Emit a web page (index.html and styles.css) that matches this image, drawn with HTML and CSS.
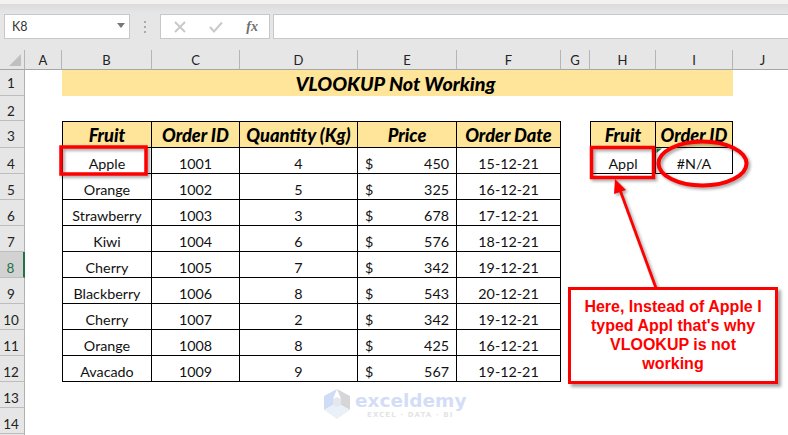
FILE: index.html
```html
<!DOCTYPE html>
<html lang="en">
<head>
<meta charset="utf-8">
<title>VLOOKUP Not Working</title>
<link rel="stylesheet" href="styles.css">
</head>
<body>
<div class="app">
  <div class="strip"></div>
  <div class="formula-bar">
    <div class="name-box"><span>K8</span><i class="caret"></i></div>
    <svg class="dots" width="4" height="14" viewBox="0 0 4 14"><rect x="1" y="1" width="2" height="2"/><rect x="1" y="6" width="2" height="2"/><rect x="1" y="11" width="2" height="2"/></svg>
    <div class="fx-box">
      <svg class="fx-icon" width="12" height="12" viewBox="0 0 12 12"><path d="M1 1L11 11M11 1L1 11"/></svg>
      <svg class="fx-icon" width="14" height="12" viewBox="0 0 14 12"><path d="M1 6L5 10.500L13 1.500"/></svg>
      <span class="fx">fx</span>
    </div>
    <div class="input"></div>
  </div>
  <div class="sheet">
    <div class="corner"><svg width="24" height="19" viewBox="0 0 24 19"><path d="M21 4V16H9Z"/></svg></div>
    <div class="ch">A</div><div class="ch">B</div><div class="ch">C</div><div class="ch">D</div><div class="ch">E</div><div class="ch">F</div><div class="ch">G</div><div class="ch">H</div><div class="ch">I</div><div class="ch">J</div>

    <div class="rh high">1</div><div></div><div class="title">VLOOKUP Not Working</div><div></div>
    <div class="rh">2</div><div class="blank"></div>

    <div class="rh mid">3</div><div></div>
    <div class="hd first">Fruit</div><div class="hd">Order ID</div><div class="hd">Quantity (Kg)</div><div class="hd">Price</div><div class="hd">Order Date</div><div></div>
    <div class="hd first">Fruit</div><div class="hd">Order ID</div><div></div>

    <div class="rh">4</div><div></div>
    <div class="td first">Apple</div><div class="td">1001</div><div class="td">4</div><div class="td money"><span>$</span><span>450</span></div><div class="td">15-12-21</div><div></div>
    <div class="td first">Appl</div><div class="td">#N/A</div><div></div>

    <div class="rh">5</div><div></div>
    <div class="td first">Orange</div><div class="td">1002</div><div class="td">5</div><div class="td money"><span>$</span><span>325</span></div><div class="td">16-12-21</div><div class="rest"></div>

    <div class="rh">6</div><div></div>
    <div class="td first">Strawberry</div><div class="td">1003</div><div class="td">3</div><div class="td money"><span>$</span><span>678</span></div><div class="td">17-12-21</div><div class="rest"></div>

    <div class="rh">7</div><div></div>
    <div class="td first">Kiwi</div><div class="td">1004</div><div class="td">6</div><div class="td money"><span>$</span><span>576</span></div><div class="td">18-12-21</div><div class="rest"></div>

    <div class="rh active">8</div><div></div>
    <div class="td first">Cherry</div><div class="td">1005</div><div class="td">7</div><div class="td money"><span>$</span><span>342</span></div><div class="td">19-12-21</div><div class="rest"></div>

    <div class="rh">9</div><div></div>
    <div class="td first">Blackberry</div><div class="td">1006</div><div class="td">8</div><div class="td money"><span>$</span><span>543</span></div><div class="td">20-12-21</div><div class="rest"></div>

    <div class="rh">10</div><div></div>
    <div class="td first">Cherry</div><div class="td">1007</div><div class="td">2</div><div class="td money"><span>$</span><span>342</span></div><div class="td">19-12-21</div><div class="rest"></div>

    <div class="rh">11</div><div></div>
    <div class="td first">Orange</div><div class="td">1008</div><div class="td">8</div><div class="td money"><span>$</span><span>425</span></div><div class="td">16-12-21</div><div class="rest"></div>

    <div class="rh">12</div><div></div>
    <div class="td first">Avacado</div><div class="td">1009</div><div class="td">9</div><div class="td money"><span>$</span><span>567</span></div><div class="td">19-12-21</div><div class="rest"></div>

    <div class="rh">13</div><div class="blank"></div>
    <div class="rh">14</div><div class="blank"></div>
    <div class="rh"></div><div class="blank"></div>
  </div>

  <svg class="marks" width="788" height="435" viewBox="0 0 788 435">
    <polygon class="err" points="656.500,148.500 662,148.500 656.500,153"/>
    <g class="shadowed">
      <rect class="red" x="61" y="147" width="85" height="27"/>
      <rect class="red" x="591.500" y="147.500" width="62" height="30"/>
      <ellipse class="red thick" cx="702.500" cy="163.500" rx="44" ry="22"/>
      <path class="red thin" d="M656 288L620 190"/>
      <polygon class="head" points="615,179 614,194 626,190"/>
    </g>
  </svg>

  <div class="callout">Here, Instead of Apple I typed Appl that's why VLOOKUP is not working</div>

  <div class="mark">
    <svg width="28" height="32" viewBox="0 0 28 32">
      <polygon fill="#cfdcf6" points="14,1 1,8 1,22 10,17 10,11"/>
      <polygon fill="#d6d6d8" points="14,1 27,8 27,22 18,17 18,11"/>
      <polygon fill="#eaf0f8" points="1,22 14,31 27,22 14,15"/>
      <polygon fill="#e4e7ee" points="10,11 14,9 18,11 18,17 14,19 10,17"/>
    </svg>
    <div class="mark-text">
      <div class="mark-name">exceldemy</div>
      <div class="mark-sub">EXCEL · DATA · BI</div>
    </div>
  </div>
</div>
</body>
</html>
```
FILE: styles.css
```css
* { box-sizing: border-box; }
html, body { margin: 0; padding: 0; background: #fff; }
.app {
  position: relative;
  width: 788px;
  height: 435px;
  overflow: hidden;
  font-family: Lato, "Liberation Sans", sans-serif;
  color: #111;
}
.strip {
  height: 4px;
  background: #f3f2f0;
}
.formula-bar {
  height: 46px;
  padding: 10px 0 11px 4px;
  display: flex;
  align-items: stretch;
  background: linear-gradient(#dcdcdc, #e6e6e6 10px);
}
.name-box {
  width: 126px;
  background: #fff;
  border: 1px solid #c8c8c8;
  display: flex;
  align-items: center;
  justify-content: space-between;
  padding: 0 4px 0 7px;
  font-size: 12.500px;
  color: #333;
}
.caret {
  width: 0;
  height: 0;
  margin-top: -2px;
  border-left: 4px solid transparent;
  border-right: 4px solid transparent;
  border-top: 5px solid #777;
}
.dots { margin: 6px 13px 0 13px; fill: #aaa; }
.fx-box {
  width: 110px;
  margin-right: 3px;
  background: #fff;
  border: 1px solid #c8c8c8;
  display: flex;
  align-items: center;
  padding: 0 11px 0 13px;
  justify-content: space-between;
}
.fx-icon { fill: none; stroke: #c9c9c9; stroke-width: 2; }
.fx {
  font-family: "Liberation Serif", serif;
  font-style: italic;
  font-weight: 700;
  font-size: 14px;
  color: #707070;
}
.input {
  flex: 1;
  background: #fff;
  border: 1px solid #c8c8c8;
  border-right: 0;
}
.sheet {
  display: grid;
  grid-template-columns: 25px 37px 90px 88px 118px 99px 104px 29px 66px 77px 60px;
  grid-template-rows: 20px 26px 25px 27px repeat(11, 26px);
  font-size: 14.300px;
}
.corner {
  background: #e6e6e6;
  border-bottom: 1px solid #a6a6a6;
  border-right: 1px solid #b5b5b5;
  height: 20px;
}
.corner svg { display: block; fill: #c0c0c0; }
.ch {
  background: #e6e6e6;
  border-right: 1px solid #b5b5b5;
  border-bottom: 1px solid #a6a6a6;
  display: flex;
  align-items: flex-end;
  justify-content: center;
  font-size: 13px;
  line-height: 18px;
  color: #222;
}
.ch:last-of-type { border-right: 0; }
.rh {
  background: #e6e6e6;
  border-right: 1px solid #b0b0b0;
  border-bottom: 1px solid #bdbdbd;
  display: flex;
  align-items: flex-end;
  justify-content: center;
  padding: 0 2px 1px 0;
  font-size: 13.500px;
  line-height: 16px;
  color: #222;
}
.rh.high { padding-bottom: 4px; }
.rh.mid { padding-bottom: 3px; }
.rh.active {
  background: #d2d2d2;
  border-right: 2px solid #217346;
  color: #217346;
}
.blank { grid-column: 2 / -1; }
.rest { grid-column: 8 / -1; }
.title {
  grid-column: 3 / 11;
  background: #fee599;
  display: flex;
  align-items: center;
  justify-content: center;
  padding-right: 4px;
  font-size: 19.700px;
  font-weight: 900;
  font-style: italic;
  color: #000;
}
.hd, .td {
  border-right: 1px solid #000;
  border-bottom: 1px solid #000;
  display: flex;
  align-items: flex-end;
  justify-content: center;
  white-space: nowrap;
}
.hd {
  background: #fee599;
  border-top: 1px solid #000;
  font-size: 18.200px;
  font-weight: 900;
  font-style: italic;
  color: #000;
  line-height: 22px;
  padding-bottom: 1px;
}
.td { line-height: 18px; }
.first { border-left: 1px solid #000; }
.money { justify-content: space-between; padding-left: 7px; padding-right: 7px; }
.marks { position: absolute; left: 0; top: 0; pointer-events: none; }
.err { fill: #1f7a3a; }
.shadowed { filter: drop-shadow(2px 2px 1.500px rgba(0, 0, 0, .35)); }
.red { fill: none; stroke: #f00; stroke-width: 3.500; }
.thick { stroke-width: 4; }
.thin { stroke-width: 2.800; }
.head { fill: #f00; }
.callout {
  position: absolute;
  left: 568px;
  top: 287px;
  width: 210px;
  height: 97px;
  padding: 0 10px 1px;
  background: #fff;
  border: 3px solid #f00;
  box-shadow: 3px 3px 3px rgba(0, 0, 0, .35);
  display: flex;
  align-items: center;
  text-align: center;
  font-family: "Liberation Sans", Arial, sans-serif;
  font-size: 16px;
  line-height: 19px;
  font-weight: 700;
  color: #f00;
}
.mark {
  position: absolute;
  left: 323px;
  top: 388px;
  display: flex;
  align-items: flex-start;
  gap: 4px;
}
.mark svg { display: block; }
.mark-text { font-family: "DejaVu Sans", sans-serif; font-weight: 700; }
.mark-name {
  margin-top: 2px;
  font-size: 18.500px;
  line-height: 21px;
  color: #d3def6;
}
.mark-sub {
  margin-left: 12px;
  font-size: 7px;
  line-height: 8px;
  letter-spacing: 1.100px;
  color: #e4e4e4;
  white-space: nowrap;
}
```
